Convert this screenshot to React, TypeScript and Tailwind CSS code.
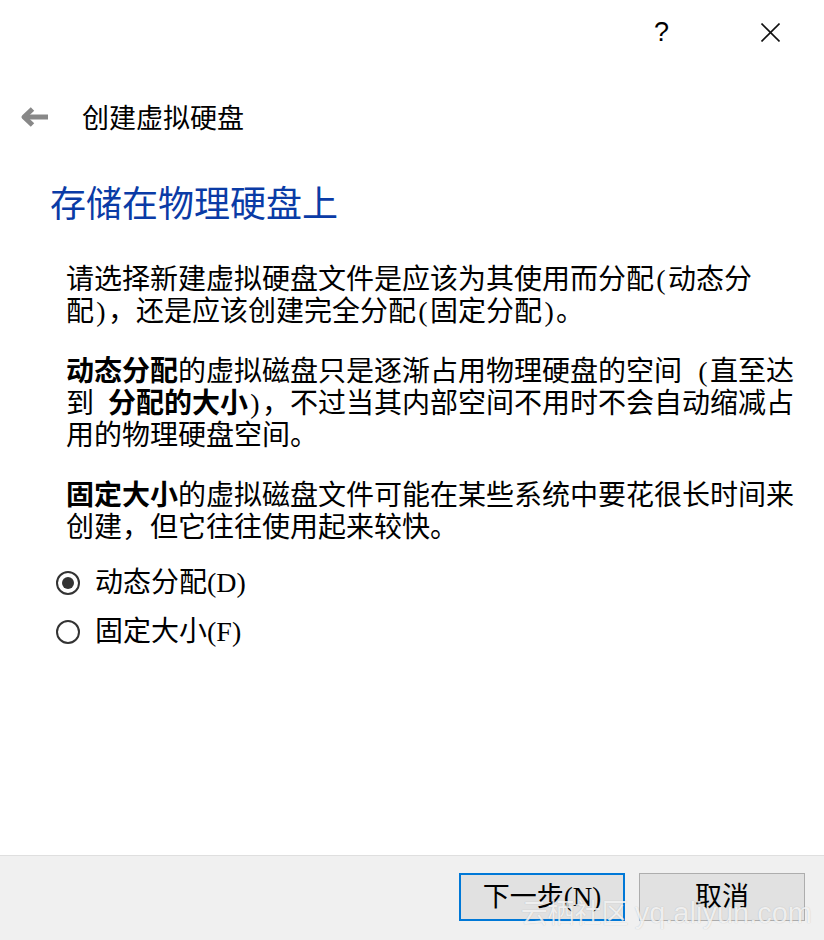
// Wizard page of the "create virtual hard disk" dialog: storage type choice.

import { useState } from "react";

const cjkSans = "font-['Noto_Sans_CJK_SC',sans-serif]";
const bodyFont = "font-['Liberation_Serif','Noto_Sans_CJK_SC',serif]";

// Half-width cell — SimSun-style ASCII takes exactly half an em
function H({ c = "" }: { c?: string }) {
  return <span className="inline-block w-[14px] text-center">{c}</span>;
}

function Radio({ checked, label, onClick }: { checked: boolean; label: string; onClick: () => void }) {
  return (
    <button onClick={onClick} className="h-[40px] flex items-center gap-[15px] text-left">
      <span className="w-[24px] h-[24px] rounded-full border-[2.5px] border-[#333] flex items-center justify-center shrink-0">
        {checked && <span className="w-[12px] h-[12px] rounded-full bg-[#333]" />}
      </span>
      <span className="text-[28px] leading-[32px] text-black">{label}</span>
    </button>
  );
}

export default function App() {
  const [mode, setMode] = useState<"dynamic" | "fixed">("dynamic");

  return (
    <div className={`relative w-[824px] h-[940px] bg-white flex flex-col ${bodyFont}`}>

      {/* ── Title bar buttons ── */}
      <div className="h-[64px] flex items-center justify-end pr-[44px] gap-[92px]">
        <span className="font-['Liberation_Sans',sans-serif] text-[27px] leading-none text-black font-light">?</span>
        <svg width="19" height="19" viewBox="0 0 19 19" stroke="#111" strokeWidth="1.6" fill="none">
          <line x1="0.5" y1="0.5" x2="18.5" y2="18.5" />
          <line x1="18.5" y1="0.5" x2="0.5" y2="18.5" />
        </svg>
      </div>

      {/* ── Back arrow + wizard title ── */}
      <div className="h-[106px] flex items-center pl-[20px] gap-[34px]">
        <svg width="28" height="20" viewBox="0 0 28 20" fill="none" stroke="#888" strokeWidth="5">
          <line x1="5" y1="10" x2="28" y2="10" />
          <polyline points="12.5,2 4,10 12.5,18" strokeLinejoin="round" />
        </svg>
        <span className={`${cjkSans} text-[27px] leading-[36px] text-black`}>创建虚拟硬盘</span>
      </div>

      {/* ── Page heading ── */}
      <h1 className={`pt-[11px] pl-[50px] text-[36px] leading-[48px] text-[#0a3ba6] ${bodyFont}`}>
        存储在物理硬盘上
      </h1>

      {/* ── Explanation text ── */}
      <div className="pl-[66px] mt-[35px] text-[28px] leading-[32px] text-black whitespace-nowrap">
        <p>
          请选择新建虚拟硬盘文件是应该为其使用而分配<H c="(" />动态分
          <br />
          配<H c=")" />，还是应该创建完全分配<H c="(" />固定分配<H c=")" />。
        </p>
        <p className="mt-[28px]">
          <b>动态分配</b>的虚拟磁盘只是逐渐占用物理硬盘的空间<H /><H c="(" />直至达
          <br />
          到<H /><b>分配的大小</b><H c=")" />，不过当其内部空间不用时不会自动缩减占
          <br />
          用的物理硬盘空间。
        </p>
        <p className="mt-[28px]">
          <b>固定大小</b>的虚拟磁盘文件可能在某些系统中要花很长时间来
          <br />
          创建，但它往往使用起来较快。
        </p>
      </div>

      {/* ── Storage type choice ── */}
      <div className="pl-[56px] mt-[19px] flex flex-col gap-[9px] items-start">
        <Radio checked={mode === "dynamic"} label="动态分配(D)" onClick={() => setMode("dynamic")} />
        <Radio checked={mode === "fixed"} label="固定大小(F)" onClick={() => setMode("fixed")} />
      </div>

      <div className="flex-1" />

      {/* ── Footer buttons ── */}
      <div className="h-[85px] bg-[#f0f0f0] border-t border-[#dfdfdf] flex justify-end items-start pt-[17px] pr-[19px] gap-[14px]">
        <button className="w-[166px] h-[48px] bg-[#e1e1e1] border-2 border-[#0078d7] text-[27px] leading-none text-black flex items-center justify-center">
          下一步(N)
        </button>
        <button className="w-[166px] h-[48px] bg-[#e1e1e1] border border-[#adadad] text-[27px] leading-none text-black flex items-center justify-center">
          取消
        </button>
      </div>

      {/* Watermark over the footer */}
      <div className={`absolute right-[12px] bottom-[12px] ${cjkSans} text-[27px] leading-none text-white/80 [text-shadow:0_0_1px_rgba(0,0,0,0.25)] pointer-events-none`}>
        云栖社区 <span className="font-['Liberation_Sans',sans-serif] text-[29px]">yq.aliyun.com</span>
      </div>
    </div>
  );
}
